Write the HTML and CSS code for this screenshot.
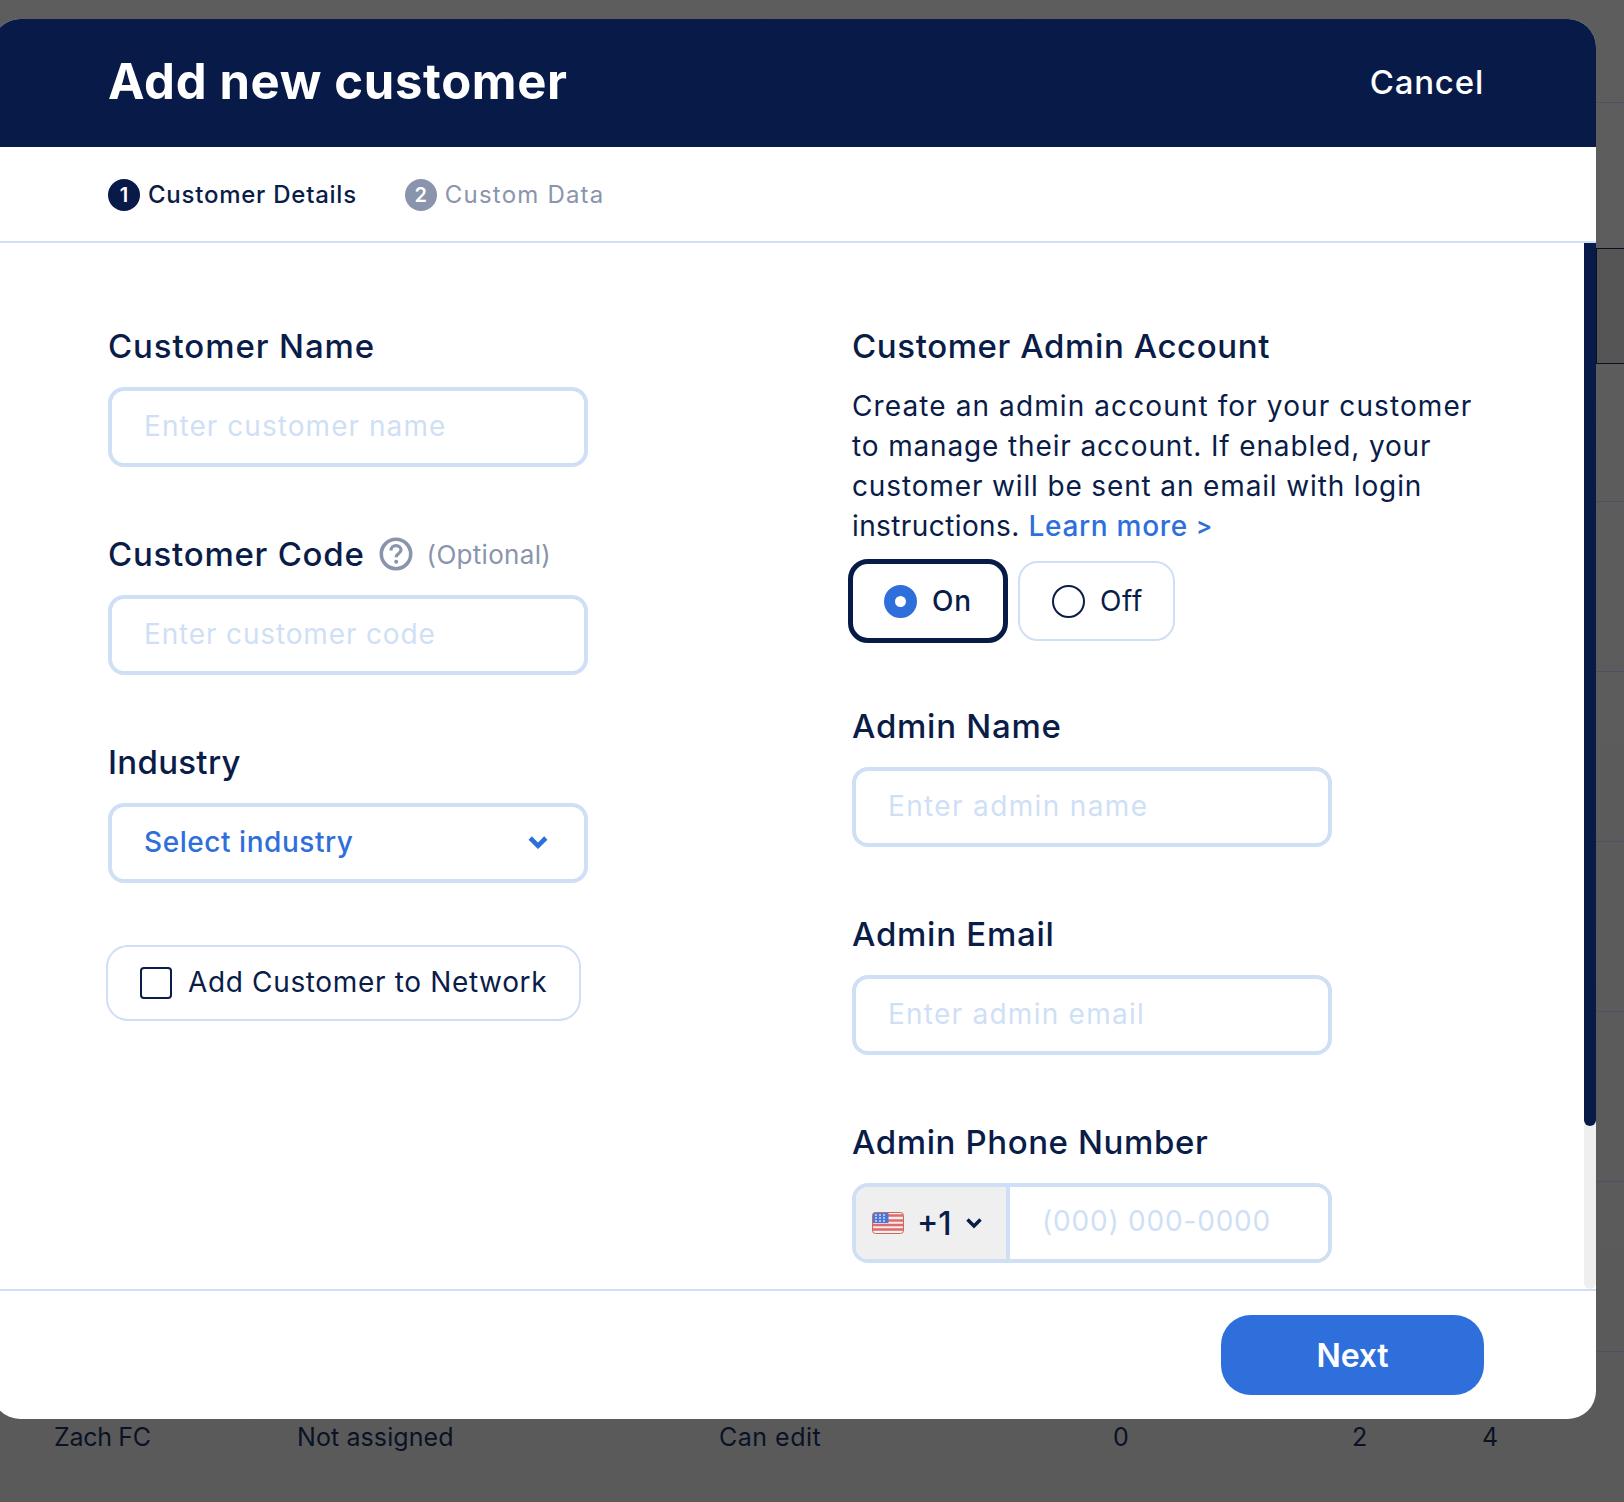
FILE: index.html
```html
<!DOCTYPE html>
<html lang="en">
<head>
<meta charset="utf-8">
<title>Add new customer</title>
<link rel="stylesheet" href="styles.css">
</head>
<body>
<div class="page">
  <div class="table">
    <div class="line l1"></div>
    <div class="focus-row"></div>
    <div class="line l2"></div>
    <div class="line l3"></div>
    <div class="line l3"></div>
    <div class="line l3"></div>
    <div class="line l3"></div>
    <div class="line l3"></div>
    <div class="cells">
      <span class="c1">Zach FC</span><span class="c2">Not assigned</span><span class="c3">Can edit</span><span class="c4">0</span><span class="c5">2</span><span class="c6">4</span>
    </div>
  </div>

  <div class="modal">
    <header class="head">
      <h1 class="title">Add new customer</h1>
      <span class="cancel">Cancel</span>
    </header>
    <nav class="steps">
      <div class="step active"><span class="badge">1</span><span class="step-text">Customer Details</span></div>
      <div class="step muted"><span class="badge">2</span><span class="step-text">Custom Data</span></div>
    </nav>
    <div class="body">
      <div class="content">
        <section class="col">
          <div class="field">
            <label class="label name">Customer Name</label>
            <input class="input" placeholder="Enter customer name">
          </div>
          <div class="field">
            <label class="label">Customer Code
              <svg class="help" viewBox="0 0 34 34"><circle cx="17" cy="17" r="14.7" fill="none" stroke="#8a94ad" stroke-width="3.6"/><path d="M12 13.400c0-2.800 2.200-4.700 5-4.700s5 1.800 5 4.300c0 3.500-4.800 3.600-4.800 7.200" fill="none" stroke="#8a94ad" stroke-width="3.200"/><circle cx="17.200" cy="24.800" r="2" fill="#8a94ad"/></svg>
              <span class="optional">(Optional)</span></label>
            <input class="input code" placeholder="Enter customer code">
          </div>
          <div class="field">
            <label class="label industry">Industry</label>
            <div class="select"><span class="select-text">Select industry</span>
              <svg class="chev" viewBox="0 0 20 14"><path d="M2.200 3l7.800 7.800L17.800 3" fill="none" stroke="#2e6fdb" stroke-width="4.600"/></svg>
            </div>
          </div>
          <div class="network"><span class="check"></span><span class="network-text">Add Customer to Network</span></div>
        </section>

        <section class="col">
          <div class="admin-head">
            <label class="label account">Customer Admin Account</label>
            <p class="desc"><span class="wide">Create an admin account for your customer</span><br>to manage their account. If enabled, your<br>customer will be sent an email with login<br><span class="tight">instructions.</span> <a class="link">Learn more <span class="arrow">&gt;</span></a></p>
          </div>
          <div class="radios">
            <div class="radio on"><span class="dot"></span><span class="radio-text">On</span></div>
            <div class="radio off"><span class="dot"></span><span class="radio-text">Off</span></div>
          </div>
          <div class="field first">
            <label class="label">Admin Name</label>
            <input class="input admin-name" placeholder="Enter admin name">
          </div>
          <div class="field">
            <label class="label">Admin Email</label>
            <input class="input admin-email" placeholder="Enter admin email">
          </div>
          <div class="field">
            <label class="label account">Admin Phone Number</label>
            <div class="phone">
              <div class="prefix">
                <svg class="flag" viewBox="0 0 32 22"><rect width="32" height="22" rx="3" fill="#f4eeee"/><path d="M1 3.500h30M0 8.500h32M0 13h32M0 17.500h32" stroke="#e2696a" stroke-width="2.300"/><path d="M3 .5h13.500v10.500H.5V3A2.500 2.500 0 0 1 3 .5z" fill="#4a78d8"/><g fill="#dbe6fb"><circle cx="4" cy="3" r=".9"/><circle cx="8" cy="3" r=".9"/><circle cx="12" cy="3" r=".9"/><circle cx="4" cy="6" r=".9"/><circle cx="8" cy="6" r=".9"/><circle cx="12" cy="6" r=".9"/><circle cx="4" cy="9" r=".9"/><circle cx="8" cy="9" r=".9"/><circle cx="12" cy="9" r=".9"/></g><rect x=".5" y=".5" width="31" height="21" rx="3" fill="none" stroke="#c96a60" stroke-width="1"/></svg>
                <span class="code-text">+1</span>
                <svg class="chev-sm" viewBox="0 0 18 12"><path d="M2.500 2.500L9 9l6.500-6.500" fill="none" stroke="#0a1c48" stroke-width="3.400"/></svg>
              </div>
              <input class="phone-input" placeholder="(000) 000-0000">
            </div>
          </div>
        </section>
      </div>
      <div class="track"><div class="thumb"></div></div>
    </div>
    <footer class="foot"><button class="next">Next</button></footer>
  </div>
</div>
</body>
</html>
```

FILE: styles.css
```css
* { box-sizing: border-box; }
html, body { margin: 0; padding: 0; }
body { width: 1624px; height: 1502px; overflow: hidden; background: #5b5b5b; font-family: "Inter", "Noto Sans", sans-serif; color: #0a1c48; }
.page { position: relative; width: 1624px; height: 1502px; overflow: hidden; background: linear-gradient(#5d5d5d, #5a5a5a); }

.table { display: flex; flex-direction: column; }
.line { height: 1px; background: #4e5162; flex: none; }
.l1 { margin-top: 102px; }
.focus-row { margin: 145px 0 0 1596px; height: 116px; background: #555; border: 1px solid #07101f; border-right: 0; flex: none; }
.l2 { margin-top: 137px; }
.l3 { margin-top: 169px; }
.cells { position: relative; height: 48px; margin-top: 61px; font-size: 25px; line-height: 48px; color: #0a1226; letter-spacing: .1px; }
.cells span { position: absolute; top: 0; }
.c1 { left: 54px; letter-spacing: -.3px; }
.c2 { left: 297px; }
.c3 { left: 719px; letter-spacing: .5px; }
.c4 { left: 1113px; }
.c5 { left: 1352px; }
.c6 { left: 1482px; }

.modal { position: absolute; left: -8px; top: 19px; width: 1604px; height: 1400px; background: #fff; border-radius: 28px; overflow: hidden; display: flex; flex-direction: column; }

.head { height: 128px; flex: none; background: #081b48; display: flex; align-items: center; justify-content: space-between; padding: 0 112px 0 116px; }
.title { margin: 0; padding-bottom: 2px; font-size: 49px; line-height: 64px; font-weight: 700; color: #fff; letter-spacing: .65px; }
.cancel { padding-bottom: 2px; font-size: 33px; font-weight: 500; color: #fff; letter-spacing: .8px; }

.steps { height: 96px; flex: none; border-bottom: 2px solid #cfdff5; display: flex; align-items: center; gap: 48px; padding-left: 116px; }
.step { display: flex; align-items: center; gap: 8px; font-size: 24px; font-weight: 500; letter-spacing: .75px; }
.badge { width: 32px; height: 32px; margin-top: 2px; border-radius: 50%; display: flex; align-items: center; justify-content: center; color: #fff; font-size: 20px; font-weight: 600; letter-spacing: 0; background: #081b48; }
.step.muted { color: #8a94ad; font-weight: 400; letter-spacing: 1.2px; }
.step.muted .badge { background: #8a94ad; letter-spacing: 0; }

.body { flex: 1; min-height: 0; display: flex; }
.content { flex: 1; min-width: 0; overflow: hidden; padding: 80px 0 0 116px; display: grid; grid-template-columns: 744px 1fr; }
.col { display: flex; flex-direction: column; }
.track { width: 12px; flex: none; background: #efefef; border-radius: 0 0 6px 6px; }
.thumb { height: 883px; background: #081b48; border-radius: 0 0 6px 6px; }

.field { display: flex; flex-direction: column; gap: 16px; margin-bottom: 64px; flex: none; }
.field.first { margin-top: 60px; }
.label { display: flex; align-items: center; height: 48px; padding-bottom: 2px; font-size: 33px; font-weight: 500; letter-spacing: .75px; color: #0a1c48; white-space: nowrap; }
.label.name { letter-spacing: .9px; }
.label.industry { letter-spacing: .3px; }
.label.account { letter-spacing: .6px; }
.help { width: 34px; height: 34px; margin-left: 14px; }
.optional { margin-left: 14px; font-size: 26px; font-weight: 400; color: #8a94ad; letter-spacing: .3px; }

.input { width: 480px; height: 80px; border: 4px solid #cfdff5; border-radius: 16px; padding: 0 32px 2px; font: 400 28px "Inter", sans-serif; letter-spacing: 1.05px; color: #0a1c48; background: #fff; outline: 0; }
.input.code { letter-spacing: .85px; }
.input.admin-name { letter-spacing: 1.35px; }
.input.admin-email { letter-spacing: 1.25px; }
.input::placeholder, .phone-input::placeholder { color: #cfdff5; opacity: 1; }

.select { width: 480px; height: 80px; border: 4px solid #cfdff5; border-radius: 16px; padding: 0 36px 2px 32px; display: flex; align-items: center; justify-content: space-between; }
.select-text { font-size: 28px; font-weight: 500; letter-spacing: .55px; color: #2e6fdb; }
.chev { width: 20px; height: 14px; }

.network { width: 475px; height: 76px; margin: -2px 0 0 -2px; border: 2px solid #cfdff5; border-radius: 22px; display: flex; align-items: center; padding-left: 32px; gap: 16px; }
.check { width: 32px; height: 32px; border: 2px solid #0a1c48; border-radius: 4px; flex: none; }
.network-text { font-size: 28px; letter-spacing: .65px; padding-bottom: 2px; white-space: nowrap; }

.admin-head { display: flex; flex-direction: column; }
.desc { margin: 15px 0 13px; font-size: 28px; line-height: 40px; letter-spacing: .86px; color: #0a1c48; white-space: nowrap; }
.wide { letter-spacing: 1.1px; }
.tight { letter-spacing: .4px; }
.link { color: #2e6fdb; font-weight: 500; letter-spacing: .7px; }
.arrow { font-size: 24px; line-height: 0; font-weight: 600; vertical-align: 2px; }

.radios { display: flex; align-items: center; gap: 10px; margin-left: -4px; height: 84px; flex: none; }
.radio { display: flex; align-items: center; gap: 15px; font-size: 28px; letter-spacing: .7px; }
.radio.on { width: 160px; height: 84px; border: 5px solid #081b48; border-radius: 20px; padding-left: 31px; font-weight: 500; }
.radio.off { width: 157px; height: 80px; border: 2px solid #cfdff5; border-radius: 20px; padding-left: 32px; }
.dot { width: 33px; height: 33px; border-radius: 50%; flex: none; }
.on .dot { border: 11px solid #2e6fdb; background: #fff; }
.off .dot { border: 2px solid #0a1c48; }

.phone { width: 480px; height: 80px; border: 4px solid #cfdff5; border-radius: 16px; display: flex; overflow: hidden; }
.prefix { width: 154px; flex: none; background: #efefef; border-right: 4px solid #cfdff5; display: flex; align-items: center; padding-left: 16px; }
.flag { width: 32px; height: 22px; flex: none; }
.code-text { margin-left: 13px; font-size: 32px; font-weight: 500; }
.chev-sm { width: 18px; height: 12px; margin-left: 13px; flex: none; }
.phone-input { flex: 1; min-width: 0; border: 0; outline: 0; padding: 0 0 4px 32px; font: 400 28px "Inter", sans-serif; letter-spacing: .8px; background: #fff; }

.foot { height: 130px; flex: none; border-top: 2px solid #cfdff5; display: flex; justify-content: flex-end; align-items: flex-start; padding: 24px 112px 0 0; }
.next { width: 263px; height: 80px; border: 0; border-radius: 30px; background: #2e6fdb; color: #fff; font: 600 32px "Inter", sans-serif; letter-spacing: -.2px; }
```
